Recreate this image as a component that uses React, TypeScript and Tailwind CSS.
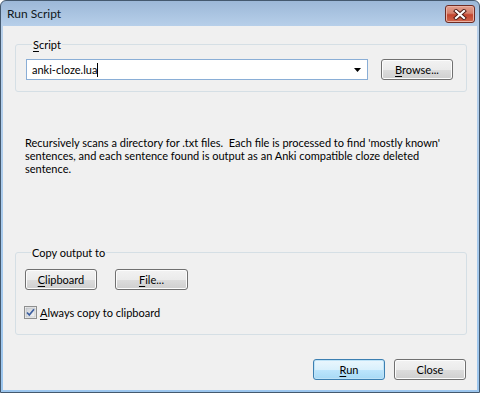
import type { ReactNode } from 'react'

const FONT = 'font-["Lato","Noto_Sans",sans-serif]'

function Btn({ children, primary = false, w = 'w-[72px]' }: { children: ReactNode; primary?: boolean; w?: string }) {
  return (
    <button
      className={`${w} h-[21px] rounded-[3px] border text-[11px] leading-[15px] text-black
        ${primary
          ? 'border-[#3c7fb1] bg-[linear-gradient(#eaf6fd,#d9f0fc_50%,#bee6fd_50%,#a7d9f5)] shadow-[inset_0_0_0_1px_#bfe3f7]'
          : 'border-[#707070] bg-[linear-gradient(#f2f2f2,#ebebeb_50%,#dddddd_50%,#cfcfcf)] shadow-[inset_0_0_0_1px_#fcfcfc]'}`}
    >
      {children}
    </button>
  )
}

function U({ children }: { children: ReactNode }) {
  return <span className="underline underline-offset-2">{children}</span>
}

export default function App() {
  return (
    <div className={`w-[480px] h-[393px] ${FONT} text-[11px] text-black`}>
      <div className="w-full h-full flex flex-col rounded-t-[6px] border border-[#44596f] bg-[linear-gradient(#9cb8d8,#b8d0ea_26px,#9cc6ee)]">
        {/* title bar */}
        <div className="h-[25px] flex items-center justify-between pl-[6px] pr-[4px]">
          <span className="text-[12px] text-[#101820] leading-[16px]">Run Script</span>
          <div className="w-[30px] h-[18px] mt-[1px] rounded-[3px] border border-[#6e2c24] bg-[linear-gradient(#e2a08f,#d5806c_45%,#c2452f_55%,#d0684e)] shadow-[inset_0_0_0_1px_#eab2a4] flex items-center justify-center">
            <svg width="14" height="11" viewBox="0 0 14 11">
              <path d="M3 2 L11 9 M11 2 L3 9" stroke="#4a1a14" strokeWidth="4" strokeLinecap="square" />
              <path d="M3 2 L11 9 M11 2 L3 9" stroke="#ffffff" strokeWidth="2.2" strokeLinecap="square" />
            </svg>
          </div>
        </div>

        {/* client area */}
        <div className="flex-1 mx-[2px] mb-[2px] bg-[#f0f0f0] flex flex-col whitespace-nowrap">
          <fieldset className="ml-[12px] mt-[11px] w-[452px] rounded-[3px] border border-[#d5dfe5] pl-[10px] pb-[11px]">
            <legend className="ml-[6px] px-[1px] leading-[15px]">
              <U>S</U>cript
            </legend>
            <div className="flex items-center mt-[7px]">
              <div className="w-[342px] h-[21px] bg-white border border-[#8aaed6] flex items-center pl-[5px] pr-[6px]">
                <span className="leading-[15px]">anki-cloze.lua</span>
                <span className="w-[1px] h-[14px] bg-black" />
                <span className="flex-1" />
                <svg width="7" height="4" viewBox="0 0 7 4">
                  <path d="M0 0 H7 L3.5 4 Z" fill="#000" />
                </svg>
              </div>
              <div className="ml-[13px] -mt-[1px]">
                <Btn>
                  <U>B</U>rowse...
                </Btn>
              </div>
            </div>
          </fieldset>

          <p className="ml-[22px] mt-[44px] leading-[13px]">
            Recursively scans a directory for .txt files.&nbsp; Each file is processed to find 'mostly known'
            <br />
            sentences, and each sentence found is output as an Anki compatible cloze deleted
            <br />
            sentence.
          </p>

          <fieldset className="ml-[12px] mt-[70px] w-[452px] rounded-[3px] border border-[#d5dfe5] pl-[9px] pb-[14px]">
            <legend className="ml-[6px] px-[1px] leading-[15px]">Copy output to</legend>
            <div className="flex gap-[18px] mt-[9px]">
              <Btn>
                <U>C</U>lipboard
              </Btn>
              <Btn w="w-[73px]">
                <U>F</U>ile...
              </Btn>
            </div>
            <div className="flex items-center mt-[15px] -ml-[1px]">
              <svg width="13" height="13" viewBox="0 0 13 13">
                <defs>
                  <linearGradient id="cb" x1="0" y1="0" x2="1" y2="1">
                    <stop offset="0" stopColor="#cbcfd5" />
                    <stop offset="1" stopColor="#f6f6f6" />
                  </linearGradient>
                </defs>
                <rect x="0.5" y="0.5" width="12" height="12" fill="#f4f4f4" stroke="#8e8f8f" />
                <rect x="2" y="2" width="9" height="9" fill="url(#cb)" stroke="#b0b4ba" strokeWidth="0.6" />
                <path d="M3 6.5 L5.3 9 L10 3.2" fill="none" stroke="#3c5fa0" strokeWidth="1.7" />
              </svg>
              <span className="ml-[3px] leading-[15px]">
                <U>A</U>lways copy to clipboard
              </span>
            </div>
          </fieldset>

          <div className="flex justify-end gap-[9px] pr-[11px] mt-[24px]">
            <Btn primary>
              <U>R</U>un
            </Btn>
            <Btn>Close</Btn>
          </div>
        </div>
      </div>
    </div>
  )
}
